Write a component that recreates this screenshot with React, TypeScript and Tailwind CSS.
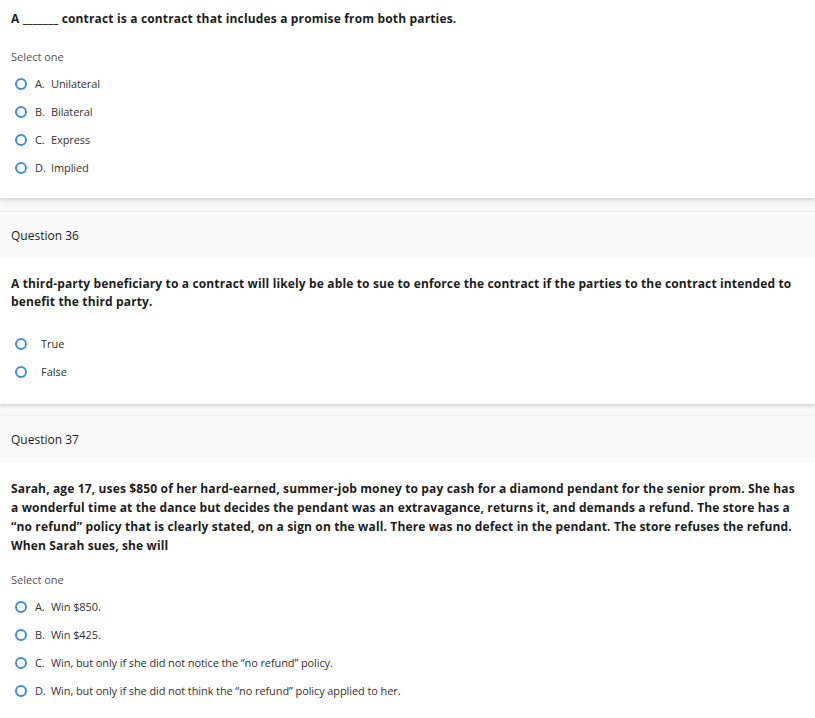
import React from "react";

const Radio: React.FC = () => (
  <span className="inline-block w-[12px] h-[12px] rounded-full border-2 border-[#3d8fdc] bg-white shrink-0" />
);

interface OptProps {
  letter?: string;
  text: string;
  wide?: boolean;
}

const Option: React.FC<OptProps> = ({ letter, text, wide }) => (
  <div className="flex items-center h-[28px] pl-[15px]">
    <Radio />
    {letter ? (
      <span className="ml-[8px] text-[11px] text-[#333] tracking-[-0.1px]">
        <span className="inline-block w-[16px]">{letter}.</span>
        {text}
      </span>
    ) : (
      <span className={`${wide ? "ml-[14px]" : "ml-[8px]"} text-[11px] text-[#333]`}>{text}</span>
    )}
  </div>
);

const Header: React.FC<{ n: number }> = ({ n }) => (
  <div className="bg-[#fafafa] border-t border-[#f0f0f0] h-[48px] flex items-center px-[11px] text-[12px] text-[#222]">
    Question {n}
  </div>
);

export default function App() {
  return (
    <div className="bg-[#f7f7f7] min-h-screen font-['Open_Sans',sans-serif] w-[815px]">
      <div className="bg-white shadow-[0_2px_3px_rgba(0,0,0,0.15)] h-[198px] pt-[10px]">
        <p className="px-[11px] text-[12px] font-bold text-[#1d1d1d] leading-[18px] tracking-[0.16px]">
          A _______ contract is a contract that includes a promise from both parties.
        </p>
        <div className="px-[11px] mt-[20px] text-[11px] text-[#555] leading-[18px]">Select one</div>
        <div className="mt-[4px]">
          <Option letter="A" text="Unilateral" />
          <Option letter="B" text="Bilateral" />
          <Option letter="C" text="Express" />
          <Option letter="D" text="Implied" />
        </div>
      </div>

      <div className="bg-white mt-[13px] shadow-[0_2px_3px_rgba(0,0,0,0.15)] h-[193px]">
        <Header n={36} />
        <p className="pl-[11px] mt-[16px] text-[12px] font-bold text-[#1d1d1d] leading-[18px] pr-[10px] tracking-[0.14px]">
          A third-party beneficiary to a contract will likely be able to sue to enforce the contract if the parties to the contract intended to benefit the third party.
        </p>
        <div className="mt-[19px]">
          <Option text="True" wide />
          <Option text="False" wide />
        </div>
      </div>

      <div className="bg-white mt-[11px] pb-[20px]">
        <Header n={37} />
        <p className="pl-[11px] mt-[16px] text-[12px] font-bold text-[#1d1d1d] leading-[19px] pr-[10px] tracking-[0.14px]">
          Sarah, age 17, uses $850 of her hard-earned, summer-job money to pay cash for a diamond pendant for the senior prom. She has a wonderful time at the dance but decides the pendant was an extravagance, returns it, and demands a refund. The store has a “no refund” policy that is clearly stated, on a sign on the wall. There was no defect in the pendant. The store refuses the refund. When Sarah sues, she will
        </p>
        <div className="px-[11px] mt-[16px] text-[11px] text-[#555] leading-[18px]">Select one</div>
        <div className="mt-[4px]">
          <Option letter="A" text="Win $850." />
          <Option letter="B" text="Win $425." />
          <Option letter="C" text="Win, but only if she did not notice the “no refund” policy." />
          <Option letter="D" text="Win, but only if she did not think the “no refund” policy applied to her." />
        </div>
      </div>
    </div>
  );
}
